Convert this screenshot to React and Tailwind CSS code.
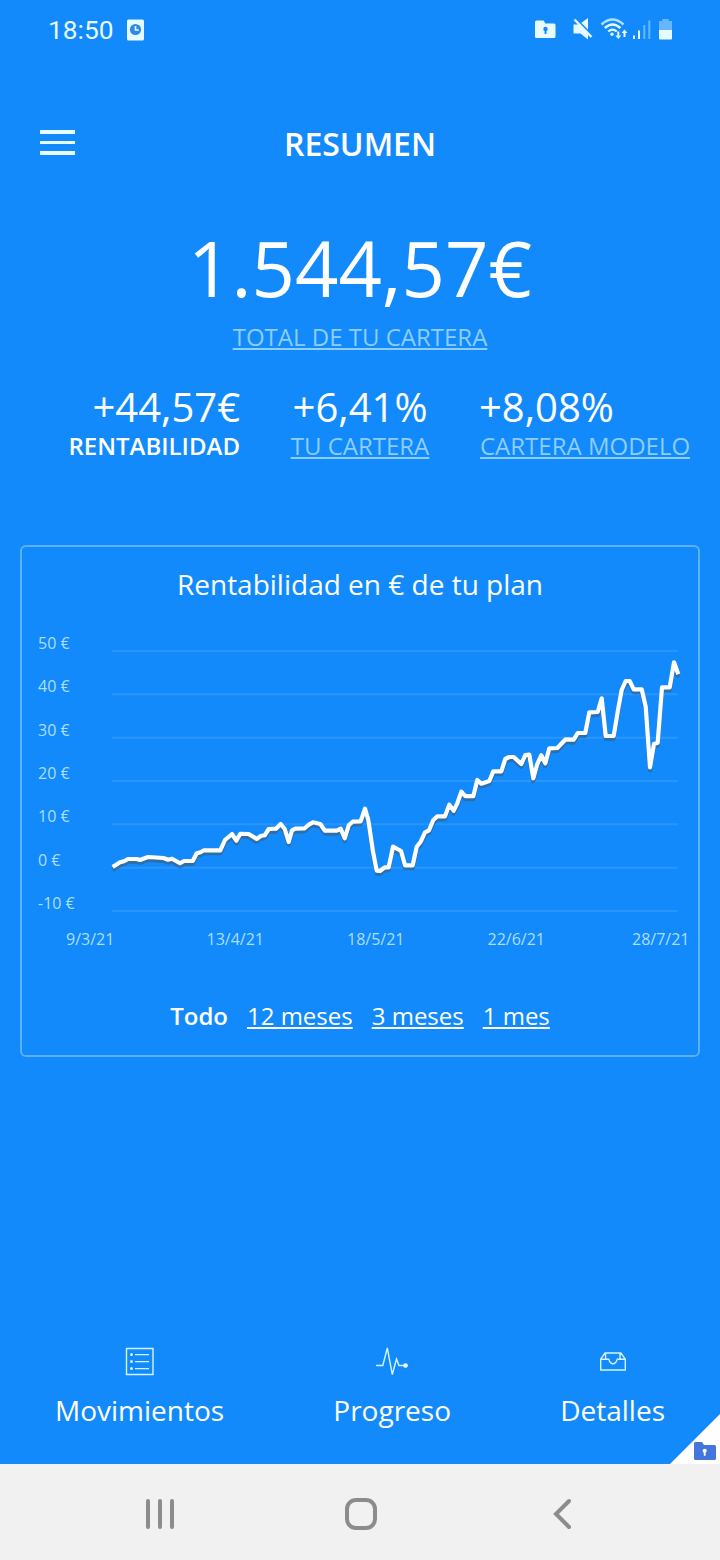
import React from 'react';

const series = [
  [112.7, 867], [120, 862.3], [124, 861.3], [128, 859], [136.7, 859], [140, 860], [148, 857], [163.5, 858],
  [168, 859.7], [172, 858.7], [180, 863.3], [184, 861], [192.7, 861], [196.7, 853.3], [200.5, 852.3], [204, 850.3],
  [220.3, 850.3], [225, 840], [232, 834], [236.3, 840.7], [240.3, 833.8], [248.7, 834], [256.7, 839], [260.7, 836],
  [264.7, 835.3], [268.7, 829], [276, 828.7], [280.7, 824], [284.7, 829], [288.7, 842], [292, 830.3], [295.3, 828.7],
  [304.7, 828.3], [308.7, 824.7], [313, 822.3], [320.3, 824], [325, 830.7], [336.7, 830.7], [340.7, 828.7],
  [344.7, 838.3], [348.7, 825.3], [352.7, 821.7], [360.7, 821.3], [365, 808.7], [368.3, 820], [373, 851.7],
  [376.7, 870.7], [380, 871], [384.7, 867.3], [388.7, 867.3], [393, 846.7], [401, 851], [405, 865.3], [412.7, 865.3],
  [416.7, 846.7], [420.7, 841.7], [425, 832.3], [429, 830.3], [433.3, 820], [437.3, 816.3], [445, 816.3],
  [449.3, 804.7], [453.7, 810.7], [457.3, 803.3], [461.3, 791.7], [465.3, 796.2], [473.3, 796.2], [477.3, 780],
  [481.3, 783.7], [489.3, 781], [493.3, 771.3], [501.3, 771.3], [505.3, 759], [509.3, 757], [513.7, 757],
  [521.3, 764], [525.3, 755], [529.3, 754.7], [533.3, 778.3], [537.3, 764], [541.3, 755.3], [545.3, 763.3],
  [549.3, 748.3], [557.3, 748], [565.7, 739.3], [573.7, 739.7], [577.7, 733], [585.3, 733], [589.3, 712.3],
  [597.7, 712], [601.7, 698.3], [605.7, 736], [613.7, 736], [618, 710], [621.7, 690], [625.7, 681], [629.7, 681],
  [633.7, 689.3], [641.7, 689.3], [645.7, 706.7], [650, 767.3], [654, 744], [657.7, 742.7], [662, 687.3],
  [669.7, 687.3], [674, 662.3], [678.3, 674.3],
];
const points = series.map((p) => p.join(',')).join(' ');

const rows = [
  ['50 €', 651], ['40 €', 694.3], ['30 €', 737.7], ['20 €', 781], ['10 €', 824.3], ['0 €', 867.7], ['-10 €', 911],
];
const dates = [['9/3/21', 66], ['13/4/21', 206.5], ['18/5/21', 347], ['22/6/21', 487.5], ['28/7/21', 632]];

function StatusBar() {
  return (
    <div className="flex h-[60px] items-center pl-[48px] pr-[47px] text-[#e6fbff]">
      <span className="font-['Roboto',sans-serif] text-[26.3px] leading-[60px]">18:50</span>
      <svg className="mb-px ml-[13.5px]" width="17" height="22" viewBox="0 0 17 22">
        <rect x="0" y="0.5" width="17" height="21" rx="1.5" fill="currentColor" />
        <circle cx="8.5" cy="10.5" r="5.6" fill="#2f8ae6" />
        <path d="M8.5 7v4h3.3" fill="none" stroke="#e6fbff" strokeWidth="1.6" />
      </svg>
      <svg className="mb-[2px] ml-auto" width="138" height="24" viewBox="535 17 138 24">
        <path d="M536.5 20.500h7l2 3h8.500q1.500 0 1.500 1.500v11.500q0 1.500-1.500 1.500h-17.500q-1.500 0-1.500-1.500v-14.500q0-1.500 1.500-1.500z" fill="currentColor" />
        <circle cx="545.500" cy="29" r="2.200" fill="#1789fb" />
        <path d="M545.500 29v5" stroke="#1789fb" strokeWidth="1.900" />
        <path d="M573.500 24.500h5.500l9-6.500v21.500l-7.500-6h-7z" fill="currentColor" />
        <path d="M573.800 16.800l20 20" stroke="#128afc" strokeWidth="2" />
        <path d="M574.500 19.500l17 17.500" stroke="currentColor" strokeWidth="2.400" />
        <g fill="none" stroke="currentColor">
          <path d="M601.500 24.500q11-10 22 0" strokeWidth="2.400" opacity="0.75" />
          <path d="M604.800 28q7.800-7 15.600 0" strokeWidth="2.400" />
          <path d="M608.200 31.500q4.300-3.800 8.600 0" strokeWidth="2.200" />
        </g>
        <circle cx="612" cy="34.300" r="1.700" fill="currentColor" />
        <path d="M617.300 31.500h2v4h2l-3 3.500-3-3.500h2zM623.500 37v-4h-2l3-3.500 3 3.500h-2v4z" fill="currentColor" />
        <path d="M633 35.500h2v3.500h-2zM638 30.500h2v8.500h-2z" fill="currentColor" />
        <path d="M643.300 25h2v14h-2zM648.300 20.500h2v18.500h-2z" fill="currentColor" opacity="0.4" />
        <path d="M659 30v-9h3.300v-2h6.400v2h3.300v9z" fill="currentColor" opacity="0.4" />
        <path d="M659 30h13v8.500q0 1-1 1h-11q-1 0-1-1z" fill="currentColor" />
      </svg>
    </div>
  );
}

function Header() {
  return (
    <header className="mt-[60px] grid h-[48px] grid-cols-[1fr_auto_1fr] items-center px-[40px]">
      <div className="mb-[3px] flex w-[35px] flex-col gap-[7px]">
        <span className="h-[3.5px] bg-[#e6feff]" />
        <span className="h-[3.5px] bg-[#e6feff]" />
        <span className="h-[3.5px] bg-[#e6feff]" />
      </div>
      <h1 className="text-[32px] font-semibold leading-[48px]">RESUMEN</h1>
      <span />
    </header>
  );
}

function Stats() {
  return (
    <section className="mt-[25px] grid grid-cols-3 whitespace-nowrap">
      <div className="text-right">
        <div className="text-[40px] leading-[50px]">+44,57€</div>
        <div className="text-[24px] font-semibold leading-[28px]">RENTABILIDAD</div>
      </div>
      <div className="text-center">
        <div className="text-[40px] leading-[50px]">+6,41%</div>
        <div className="text-[24px] leading-[28px] text-[#8dceff] underline">TU CARTERA</div>
      </div>
      <div>
        <div className="-ml-px text-[40px] leading-[50px]">+8,08%</div>
        <div className="text-[24px] leading-[28px] text-[#8dceff] underline">CARTERA MODELO</div>
      </div>
    </section>
  );
}

function Chart() {
  return (
    <svg className="block" width="676" height="350" viewBox="22 615 676 350" fontSize="16">
      {rows.map(([label, y]) => (
        <g key={label}>
          <text x="38" y={y - 2} fill="#addfff">{label}</text>
          <path d={`M112 ${y}H678`} stroke="#fff" strokeOpacity="0.1" strokeWidth="2" />
        </g>
      ))}
      {dates.map(([label, x]) => (
        <text key={label} x={x} y="945" fill="#addfff">{label}</text>
      ))}
      <polyline points={points} transform="translate(0 3)" fill="none" stroke="#35668f" strokeOpacity="0.75" strokeWidth="4" strokeLinejoin="round" />
      <polyline points={points} fill="none" stroke="#fff" strokeWidth="4.2" strokeLinejoin="round" />
    </svg>
  );
}

function ChartCard() {
  return (
    <section className="mx-[20px] mt-[85px] h-[512px] rounded-[6px] border-2 border-[#5db2ff]">
      <h2 className="h-[68px] pt-[17px] text-center text-[28px] leading-[40px]">Rentabilidad en € de tu plan</h2>
      <Chart />
      <div className="mt-[31px] flex justify-center gap-[19px] text-[24px] leading-[40px]">
        <b className="font-semibold">Todo</b>
        <a className="underline">12 meses</a>
        <a className="underline">3 meses</a>
        <a className="underline">1 mes</a>
      </div>
    </section>
  );
}

function NavItem({ label, children }) {
  return (
    <div className="flex flex-col items-center">
      <svg width="34" height="34" viewBox="0 0 34 34" fill="none" stroke="#d4f5ff" strokeWidth="1.4">{children}</svg>
      <span className="mt-[12px] text-[28px] leading-[40px]">{label}</span>
    </div>
  );
}

function BottomNav() {
  return (
    <nav className="mt-auto flex h-[120px] justify-between px-[55px]">
      <NavItem label="Movimientos">
        <path d="M3.500 4.500h26.500v26H3.500z" />
        <path d="M12 10.600h14M12 17.600h14M12 24.600h14" />
        <g fill="#d4f5ff" stroke="none">
          <circle cx="8.500" cy="10.600" r="1.500" />
          <circle cx="8.500" cy="17.600" r="1.500" />
          <circle cx="8.500" cy="24.600" r="1.500" />
        </g>
      </NavItem>
      <NavItem label="Progreso">
        <path d="M1 21.500h6.800L12.300 4l5 26.500 4.200-15.500 2.500 6.500h6" />
        <circle cx="30.500" cy="21.500" r="2.300" fill="#fff" stroke="none" />
      </NavItem>
      <NavItem label="Detalles">
        <path d="M4.700 15.200h8q1.500 4.500 4.300 4.500t4.300-4.500h8v10.800H4.700zM4.700 15.200L9 9h15.800l4.500 6.200M9.600 9v6.200M24 9v6.200" />
      </NavItem>
    </nav>
  );
}

function SystemBar() {
  return (
    <div className="grid h-[96px] grid-cols-3 items-center bg-[#f1f1f1] pl-[59px] pr-[57px] pt-[4px]">
      <svg className="justify-self-center" width="32" height="36" viewBox="144 1496 32 36" stroke="#8c8c8c" strokeWidth="4" strokeLinecap="round">
        <path d="M148 1501v26M160 1501v26M172 1501v26" />
      </svg>
      <svg className="justify-self-center" width="36" height="36" viewBox="343 1496 36 36" fill="none" stroke="#8c8c8c" strokeWidth="4">
        <rect x="347" y="1500" width="28" height="28" rx="9" />
      </svg>
      <svg className="justify-self-center" width="24" height="36" viewBox="551 1496 24 36" fill="none" stroke="#8c8c8c" strokeWidth="4" strokeLinecap="round">
        <path d="M570 1501l-13 13 13 13" />
      </svg>
    </div>
  );
}

export default function App() {
  return (
    <div className="relative flex h-[1560px] w-[720px] flex-col overflow-hidden bg-[#128afc] font-['Open_Sans',sans-serif] text-white">
      <StatusBar />
      <Header />
      <section className="mt-[46px] text-center">
        <div className="text-[76px] leading-[108px]">1.544,57€</div>
        <div className="-mt-[5px] text-[24px] leading-[40px] text-[#8dceff] underline">TOTAL DE TU CARTERA</div>
      </section>
      <Stats />
      <ChartCard />
      <BottomNav />
      <SystemBar />
      <svg className="absolute right-0 top-[1414px]" width="50" height="50" viewBox="670 1414 50 50">
        <path d="M720 1414v50h-50z" fill="#fff" />
        <path d="M695.500 1442h6.500l2 3h10.500q1.500 0 1.500 1.500v12q0 1.500-1.500 1.500h-19q-1.500 0-1.500-1.500v-15q0-1.500 1.500-1.500z" fill="#4375dc" />
        <circle cx="704.700" cy="1450.800" r="2.100" fill="#fff" />
        <path d="M704.700 1451v4.800" stroke="#fff" strokeWidth="1.800" />
      </svg>
    </div>
  );
}
